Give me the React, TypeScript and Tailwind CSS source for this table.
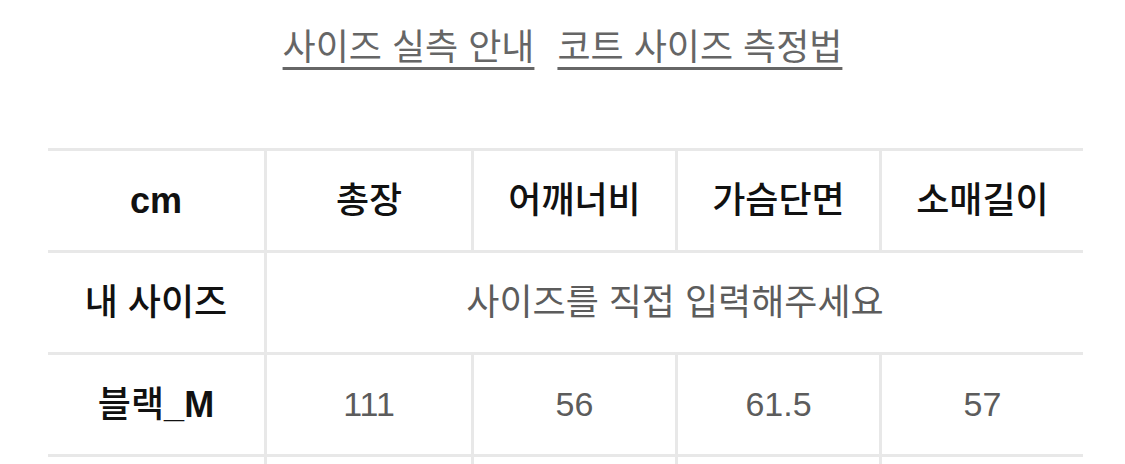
const headers = ['총장', '어깨너비', '가슴단면', '소매길이']
const rows = [{ label: '블랙', suffix: '_M', values: ['111', '56', '61.5', '57'] }]

const colW = ['w-[207px]', 'w-[204px]', 'w-[204px]', 'w-[204px]']

export default function App() {
  return (
    <div
      className="h-[464px] w-[1125px] overflow-hidden bg-white"
      style={{ fontFamily: '"Liberation Sans", "Noto Sans CJK KR", sans-serif' }}
    >
      <div className="flex h-[148px] justify-center gap-[23px] pt-[28px]">
        <a className="text-[36px] leading-[40px] text-[#666] underline decoration-[3px] underline-offset-[7px]">
          사이즈 실측 안내
        </a>
        <a className="text-[36px] leading-[40px] text-[#666] underline decoration-[3px] underline-offset-[7px]">
          코트 사이즈 측정법
        </a>
      </div>

      <div className="ml-[48px] w-[1035px]">
        <div className="flex h-[102px] border-t-[3px] border-[#e8e8e8]">
          <div className="flex w-[216px] items-center justify-center text-[36px] font-semibold text-[#111]">cm</div>
          {headers.map((h, i) => (
            <div
              key={h}
              className={`flex ${colW[i]} items-center justify-center border-l-[3px] border-[#e8e8e8] text-[36px] font-medium text-[#111]`}
            >
              {h}
            </div>
          ))}
        </div>

        <div className="flex h-[102px] border-t-[3px] border-[#e8e8e8]">
          <div className="flex w-[216px] items-center justify-center text-[36px] font-medium text-[#111]">내 사이즈</div>
          <div className="flex w-[819px] items-center justify-center border-l-[3px] border-[#e8e8e8] text-[36px] text-[#5c5c5c]">
            사이즈를 직접 입력해주세요
          </div>
        </div>

        {rows.map(r => (
          <div key={r.label} className="flex h-[102px] border-t-[3px] border-[#e8e8e8]">
            <div className="flex w-[216px] items-center justify-center text-[36px] font-medium text-[#111]">
              {r.label}
              <span className="font-semibold">{r.suffix}</span>
            </div>
            {r.values.map((v, i) => (
              <div
                key={i}
                className={`flex ${colW[i]} items-center justify-center border-l-[3px] border-[#e8e8e8] text-[34px] text-[#5c5c5c]`}
              >
                {v}
              </div>
            ))}
          </div>
        ))}

        <div className="flex h-[20px] border-t-[3px] border-[#e8e8e8]">
          <div className="w-[216px]" />
          {colW.map((w, i) => (
            <div key={i} className={`${w} border-l-[3px] border-[#e8e8e8]`} />
          ))}
        </div>
      </div>
    </div>
  )
}
